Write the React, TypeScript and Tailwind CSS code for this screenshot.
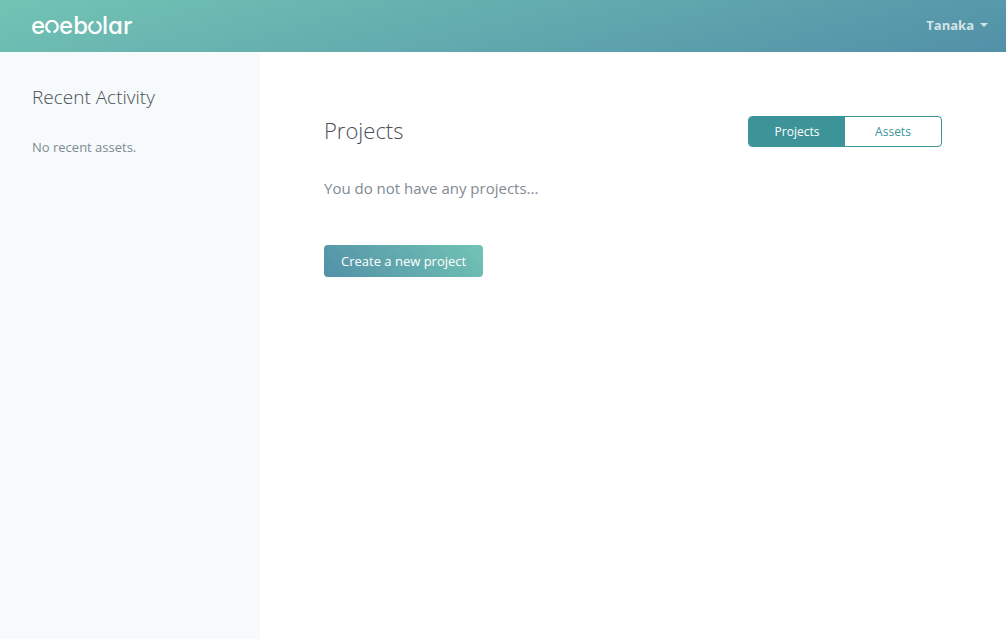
import React from "react";

function Ring({ flipped = false }: { flipped?: boolean }) {
  return (
    <svg
      className={flipped ? "mt-[2px] size-[14px] rotate-180" : "mt-[2px] size-[14px]"}
      viewBox="0 0 14 14"
      fill="none"
      stroke="currentColor"
      strokeWidth="2.3"
      aria-hidden="true"
    >
      <circle cx="7" cy="6.6" r="5.7" pathLength="100" strokeDasharray="91 9" strokeDashoffset="-29.5" />
    </svg>
  );
}

function Header() {
  return (
    <header className="flex h-[52px] items-center justify-between bg-[linear-gradient(165deg,#72c4b4,#5290a8)] pr-[18px] pl-[31px] text-white">
      <a
        href="#"
        className="flex items-center font-['Inter',sans-serif] text-[24px] leading-[28px] font-medium [font-feature-settings:'cv11']"
      >
        <span>e</span>
        <Ring />
        <span>eb</span>
        <Ring flipped />
        <span>lar</span>
      </a>
      <button type="button" className="flex items-center gap-[6px] text-[13px] font-bold text-white/75">
        Tanaka
        <svg className="mb-[2px] h-1 w-2" viewBox="0 0 8 4" fill="currentColor" aria-hidden="true">
          <path d="M0 0h8L4 4z" />
        </svg>
      </button>
    </header>
  );
}

export default function App() {
  return (
    <div className="flex min-h-screen flex-col bg-white font-['Open_Sans','Noto_Sans',sans-serif] text-[#808a93]">
      <Header />
      <div className="flex grow">
        <aside className="w-[260px] shrink-0 bg-[#f6fafb] px-8 pt-[31px]">
          <h2 className="text-[19px] leading-7 font-light text-[#495057]">Recent Activity</h2>
          <p className="mt-6 text-[13px] leading-6">No recent assets.</p>
        </aside>
        <main className="grow px-16 pt-16">
          <div className="flex items-start justify-between">
            <h1 className="text-[22px] leading-[29px] font-light text-[#495057]">Projects</h1>
            <div className="flex w-[194px] overflow-hidden rounded border border-[#3c9498] text-[12px] leading-[29px]">
              <button type="button" className="flex-1 bg-[#3c9498] text-white">Projects</button>
              <button type="button" className="flex-1 text-[#3c9498]">Assets</button>
            </div>
          </div>
          <p className="mt-[29px] text-[15px] leading-6">You do not have any projects...</p>
          <button
            type="button"
            className="mt-[45px] rounded bg-[linear-gradient(45deg,#5290a8,#72c4b4)] px-[17px] text-[13px] leading-8 text-white"
          >
            Create a new project
          </button>
        </main>
      </div>
    </div>
  );
}
